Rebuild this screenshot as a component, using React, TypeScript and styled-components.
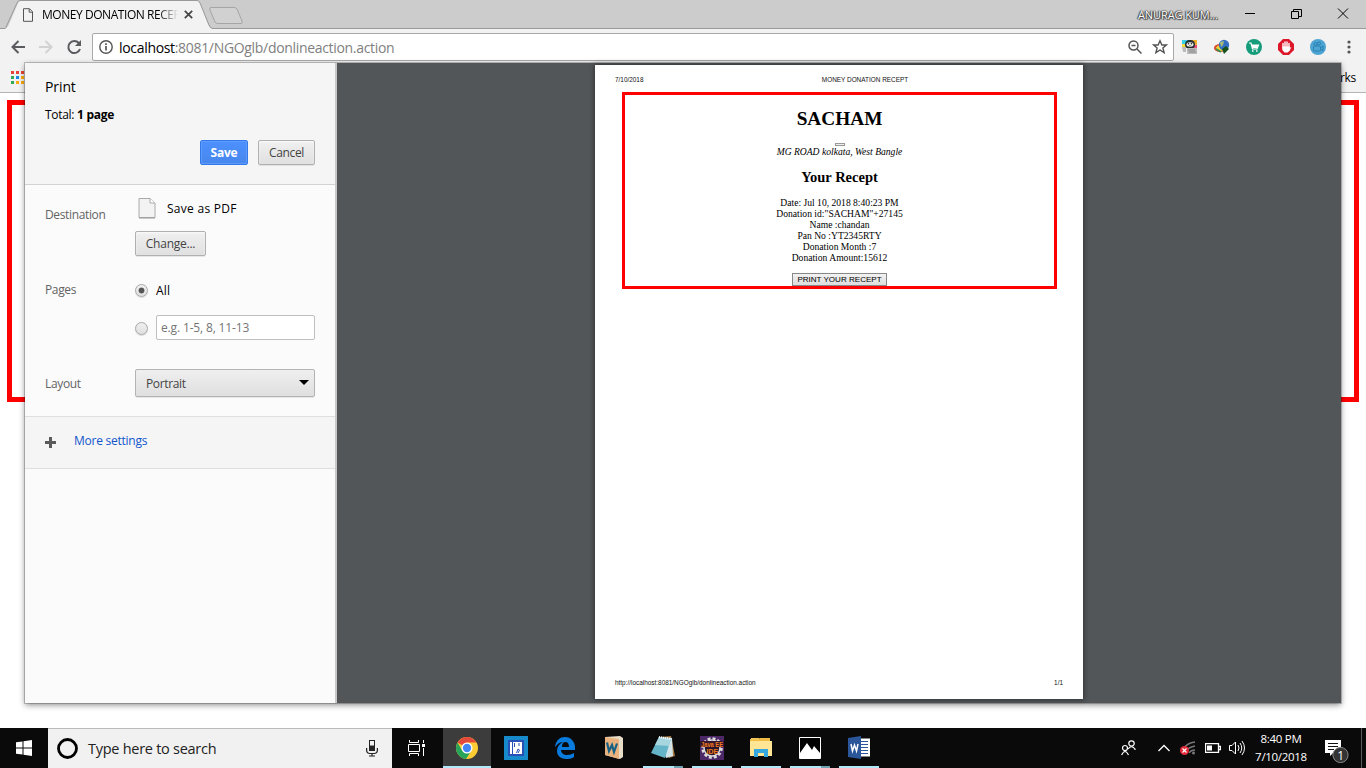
import React from "react";
import styled, { createGlobalStyle } from "styled-components";

const Global = createGlobalStyle`
  * { box-sizing: border-box; }
  body { margin: 0; background: #fff; overflow: hidden; font-family: "Open Sans", "Noto Sans", sans-serif; }
  #root { width: 1366px; height: 768px; }
  svg { display: block; flex: none; }
  button { font-family: inherit; }
`;

const Screen = styled.div`
  position: relative;
  width: 1366px;
  height: 768px;
  display: flex;
  flex-direction: column;
  background: #fff;
`;

const Text = styled.span<{ $size?: number; $track?: number; $color?: string; $bold?: boolean }>`
  font-size: ${(p) => p.$size ?? 12}px;
  letter-spacing: ${(p) => p.$track ?? 0}px;
  color: ${(p) => p.$color ?? "#000"};
  font-weight: ${(p) => (p.$bold ? 700 : 400)};
  white-space: pre;
`;

/* Browser chrome */
const TabStrip = styled.header`
  height: 29px;
  display: flex;
  background: #ccc;
  position: relative;
  border-bottom: 1px solid #999;
`;
const TabShape = styled.svg`
  position: absolute;
  left: 0;
  top: 0;
`;
const Tab = styled.div`
  position: relative;
  width: 211px;
  height: 28px;
  padding: 1px 0 0 22px;
  display: flex;
  align-items: center;
`;
const TabTitle = styled.div`
  width: 137px;
  margin-left: 8px;
  overflow: hidden;
  line-height: 18px;
  display: flex;
  -webkit-mask-image: linear-gradient(90deg, #000 116px, transparent 136px);
  mask-image: linear-gradient(90deg, #000 116px, transparent 136px);
`;
const TabClose = styled.svg`
  margin-left: 5px;
`;
const WindowControls = styled.div`
  margin-left: auto;
  display: flex;
  align-items: center;
  height: 28px;
  padding-right: 17px;
`;
const UserName = styled.span`
  width: 80px;
  font-size: 11px;
  letter-spacing: -0.1px;
  color: #fff;
  white-space: nowrap;
  text-shadow: 0 0 1px #333, 0 0 1px #333, 1px 1px 1px #444, -1px 0 1px #555, 0 0 2px #555;
  margin-right: 27px;
`;
const Toolbar = styled.div`
  height: 34px;
  padding: 4px 10px 0 10px;
  background: #f2f2f2;
  display: flex;
`;
const NavButtons = styled.div`
  width: 82px;
  height: 28px;
  display: flex;
  align-items: center;
  gap: 12px;
`;
const AddressBar = styled.div`
  width: 1082px;
  height: 28px;
  border: 1px solid #a9a9a9;
  border-radius: 2px;
  background: #fff;
  display: flex;
  align-items: center;
  padding: 0 5px;
`;
const AddressText = styled.div`
  margin: 0 auto 0 5px;
  line-height: 20px;
`;
const BookmarkStar = styled.svg`
  margin-left: 10px;
`;
const Extensions = styled.div`
  display: flex;
  align-items: center;
  gap: 16px;
  height: 28px;
  margin-left: 8px;
  > :last-child { margin-left: 5px; }
`;
const BookmarksBar = styled.div`
  height: 30px;
  background: #f2f2f2;
  border-bottom: 1px solid #b4b4b4;
  display: flex;
  justify-content: space-between;
  padding: 8px 10px 0 11px;
`;
const WebPage = styled.main`
  height: 635px;
  padding: 7px;
`;
const RedFrame = styled.div`
  height: 302px;
  border: 5px solid #f00;
`;

/* Print dialog */
const Dialog = styled.section`
  position: absolute;
  left: 25px;
  top: 63px;
  width: 1316px;
  height: 640px;
  display: flex;
  background: #fbfbfb;
  box-shadow: 0 0 0 1px rgba(0, 0, 0, 0.2), 0 2px 6px rgba(0, 0, 0, 0.45);
`;
const Sidebar = styled.aside`
  width: 312px;
  display: flex;
  flex-direction: column;
  border-right: 2px solid #c8c8c8;
`;
const PrintHeader = styled.div`
  height: 122px;
  padding: 13px 20px 0;
  background: #f5f5f5;
  border-bottom: 1px solid #d2d2d2;
  display: flex;
  flex-direction: column;
`;
const Line = styled.div<{ $h: number }>`
  line-height: ${(p) => p.$h}px;
  height: ${(p) => p.$h}px;
  display: flex;
`;
const ButtonRow = styled.div`
  display: flex;
  justify-content: flex-end;
  gap: 10px;
  margin-top: 8px;
`;
const Button = styled.button<{ $w: number; $primary?: boolean }>`
  width: ${(p) => p.$w}px;
  height: 25px;
  padding: 0;
  border: 1px solid ${(p) => (p.$primary ? "#3079ed" : "#b0b0b0")};
  border-radius: 2px;
  background: ${(p) => (p.$primary ? "linear-gradient(#4d90fe, #4787ed)" : "linear-gradient(#f0f0f0, #e0e0e0)")};
  box-shadow: ${(p) => (p.$primary ? "inset 0 0 0 1px rgba(110,165,255,.6)" : "0 1px 0 rgba(0,0,0,.08), inset 0 1px 2px rgba(255,255,255,.75)")};
  display: flex;
  align-items: center;
  justify-content: center;
`;
const Settings = styled.div`
  height: 232px;
  padding: 10px 20px 0;
  border-bottom: 1px solid #dfdfdf;
  display: flex;
  flex-direction: column;
`;
const Setting = styled.div<{ $h: number }>`
  height: ${(p) => p.$h}px;
  display: grid;
  grid-template-columns: 90px 180px;
`;
const SettingLabel = styled.div<{ $top: number }>`
  padding-top: ${(p) => p.$top}px;
  line-height: 18px;
  display: flex;
`;
const Destination = styled.div`
  display: flex;
  align-items: center;
  gap: 11px;
  height: 25px;
  padding-left: 3px;
  margin-bottom: 11px;
  span { padding-top: 2px; }
`;
const RadioRow = styled.div<{ $h: number }>`
  height: ${(p) => p.$h}px;
  display: flex;
  align-items: center;
  gap: 8px;
`;
const Radio = styled.span<{ $on?: boolean }>`
  width: 13px;
  height: 13px;
  border-radius: 50%;
  border: 1px solid #a8a8a8;
  box-shadow: 0 1px 1px rgba(0, 0, 0, 0.12);
  background: ${(p) => (p.$on ? "radial-gradient(circle, #555 0 2.6px, transparent 3.3px)," : "")} linear-gradient(#efefef, #e0e0e0);
`;
const RangeInput = styled.div`
  width: 159px;
  height: 25px;
  margin-top: -2px;
  background: #fff;
  border: 1px solid #bfbfbf;
  border-radius: 2px;
  padding-left: 4px;
  display: flex;
  align-items: center;
`;
const Select = styled.div`
  width: 180px;
  height: 28px;
  border: 1px solid #b3b3b3;
  border-radius: 2px;
  background: linear-gradient(#efefef, #dfdfdf);
  box-shadow: 0 1px 0 rgba(0, 0, 0, 0.08);
  padding: 0 5px 0 10px;
  display: flex;
  align-items: center;
  justify-content: space-between;
`;
const MoreSettings = styled.div`
  height: 52px;
  padding: 0 20px 4px;
  background: #f5f5f5;
  border-bottom: 1px solid #dfdfdf;
  display: flex;
  align-items: center;
  gap: 18px;
  svg { margin-top: 4px; }
`;
const Preview = styled.div`
  flex: 1;
  background: #525659;
  padding: 2px 0 0 258px;
`;

/* Printed sheet */
const Paper = styled.article`
  width: 488px;
  height: 634px;
  background: #fff;
  box-shadow: 0 0 5px 1px rgba(0, 0, 0, 0.4);
  display: flex;
  flex-direction: column;
  font-family: "Liberation Serif", serif;
  padding: 9px 20px 11px;
`;
const PageMargin = styled.div`
  display: grid;
  grid-template-columns: 1fr auto 1fr;
  height: 11px;
  font: 6.42px/11px "Liberation Sans", sans-serif;
  color: #111;
  > :nth-child(2) { padding-left: 52px; }
  > :last-child { text-align: right; }
`;
const Receipt = styled.div`
  width: 435px;
  height: 197px;
  margin: 7px 0 0 7px;
  border: 3px solid #f00;
  display: flex;
  flex-direction: column;
  align-items: center;
  color: #000;
  white-space: pre;
  font-size: 9.6px;
  line-height: 10.9px;
`;
const Organisation = styled.h1`
  margin: 12px 0 0;
  font-size: 19.3px;
  line-height: 24px;
`;
const EmptyButton = styled.span`
  width: 10px;
  height: 4px;
  margin-top: 12px;
  border: 1px solid #999;
  background: #eee;
`;
const Address = styled.em`
  line-height: 11px;
`;
const Heading = styled.h2`
  margin: 11px 0 12px;
  font-size: 14.5px;
  line-height: 18px;
`;
const PrintButton = styled.button`
  width: 95px;
  height: 13px;
  margin-top: 9.6px;
  padding: 0;
  border: 1px solid #888;
  background: linear-gradient(#f2f2f2, #ddd);
  font: 8.05px/10px "Liberation Sans", sans-serif;
  color: #000;
  flex: none;
`;
const Spacer = styled.div`
  flex: 1;
`;

/* Taskbar */
const Taskbar = styled.footer`
  height: 40px;
  background: #0b0a0a;
  display: flex;
`;
const Start = styled.div`
  width: 48px;
  padding: 12px 0 0 16px;
`;
const Search = styled.div`
  width: 344px;
  background: #f1f1f1;
  border-top: 1px solid #bbb;
  display: flex;
  align-items: center;
  padding: 0 14px 0 8px;
  gap: 9px;
`;
const Mic = styled.div`
  margin-left: auto;
`;
const Apps = styled.nav`
  display: flex;
  gap: 1px;
  padding-left: 2px;
`;
const TaskItem = styled.div<{ $active?: boolean; $open?: boolean; $multi?: boolean }>`
  width: 48px;
  height: 40px;
  display: flex;
  flex-direction: column;
  align-items: center;
  justify-content: space-between;
  padding-top: 7px;
  background: ${(p) => (p.$active ? "#3d3c3c" : "transparent")};
  &::after {
    content: "";
    width: ${(p) => (p.$active ? 48 : 40)}px;
    height: 2px;
    background: ${(p) => (!p.$open ? "transparent" : p.$multi ? "linear-gradient(90deg, #b0e8fa 31px, #6fa3b1 31px)" : "#b0e8fa")};
  }
`;
const Tray = styled.div`
  margin-left: auto;
  display: flex;
  align-items: center;
  color: #fff;
`;
const Clock = styled.div`
  width: 54px;
  margin-left: 8px;
  display: flex;
  flex-direction: column;
  align-items: center;
  line-height: 18px;
`;
const Gap = styled.span<{ $w: number }>`
  width: ${(p) => p.$w}px;
`;
const DesktopEdge = styled.span`
  width: 5px;
  height: 40px;
  border-left: 1px solid #5b5b5b;
`;

function BrowserTop() {
  return (
    <>
      <TabStrip>
        <TabShape width="260" height="30" fill="none">
          <path d="M0 28.5H5C8 28 9 24 10 22L18 3Q19 .5 21 .5H197Q199 .5 200 3L208 24Q210 28.5 213 28.5V30H0Z" fill="#f2f2f2" />
          <path d="M0 28.5H5Q6 28 7 25L17 3Q18 .5 20 .5H197Q199 .5 200 3L209 25Q210 28.5 213 28.5" stroke="#999" />
          <path d="M211 7.5H234Q236 7.5 237 9L242 21Q243 23.5 241 23.5H218Q216 23.5 215 22L210 10Q209 7.5 211 7.5Z" fill="#d1d1d1" stroke="#a5a5a5" />
        </TabShape>
        <Tab>
          <svg width="12" height="14" viewBox="0 0 12 14" fill="none" stroke="#555"><path d="M1.5.7H7.5L10.5 3.7V13.3H1.5ZM7.2 1V4.2H10.5" /></svg>
          <TabTitle><Text $track={-0.45}>MONEY DONATION RECEPT</Text></TabTitle>
          <TabClose width="9" height="9" viewBox="0 0 9 9" stroke="#444" strokeWidth="1.7"><path d="M.8.8L8.2 8.2M8.2.8L.8 8.2" /></TabClose>
        </Tab>
        <WindowControls>
          <UserName>ANURAG KUM...</UserName>
          <svg width="104" height="12" fill="none" stroke="#000"><path d="M0 5.500H10M46.500 3.500H53.500V10.500H46.500ZM48.500 3.500V1.500H56.500V8.500H53.500M93 .500L103 10.500M103 .500L93 10.500" /></svg>
        </WindowControls>
      </TabStrip>
      <Toolbar>
        <NavButtons>
          <svg width="16" height="16" fill="none" stroke="#5a5b5e" strokeWidth="2"><path d="M15 8H2.500M8.500 2L2.500 8L8.500 14" /></svg>
          <svg width="16" height="16" fill="none" stroke="#d2d2d2" strokeWidth="2"><path d="M1 8H13.500M7.500 2L13.500 8L7.500 14" /></svg>
          <svg width="16" height="16" fill="none"><path d="M12.800 4A6 6 0 1 0 14 10" stroke="#5a5b5e" strokeWidth="2" /><path d="M15 1V7H9Z" fill="#5a5b5e" /></svg>
        </NavButtons>
        <AddressBar>
          <svg width="16" height="16" fill="none" stroke="#555"><circle cx="8" cy="8" r="6.200" strokeWidth="1.400" /><path d="M8 7V11.500M8 4.200V5.900" strokeWidth="1.700" /></svg>
          <AddressText><Text $size={14} $track={-0.32}>localhost</Text><Text $size={14} $track={-0.32} $color="#808080">:8081/NGOglb/donlineaction.action</Text></AddressText>
          <svg width="14" height="14" fill="none" stroke="#555" strokeWidth="1.500"><circle cx="5.500" cy="5.500" r="4.500" /><path d="M9 9L13.500 13.500M3.500 5.500H7.500" /></svg>
          <BookmarkStar width="16" height="16" viewBox="0 0 16 16" fill="none" stroke="#555" strokeWidth="1.400"><path d="M8 1.800L9.900 6H14.300L10.900 8.900L12.100 13.700L8 11L3.900 13.700L5.100 8.900L1.700 6H6.100Z" /></BookmarkStar>
        </AddressBar>
        <Extensions>
          <svg width="16" height="16"><path d="M0 1H8V7H0Z" fill="#3bd1e8" /><path d="M8 1H15V8H8Z" fill="#f0b02e" /><path d="M0 5H5V9H0Z" fill="#f3db3e" /><path d="M10 6H15V10H10Z" fill="#e94f78" /><rect x="3" y="1" width="10" height="9" rx="4.500" fill="#222b2e" /><ellipse cx="8" cy="5.500" rx="3.500" ry="2.200" fill="#eee" /><circle cx="6.500" cy="4.800" r=".8" fill="#222" /><circle cx="9.500" cy="4.800" r=".8" fill="#222" /><path d="M7 6H9L8 7.500Z" fill="#775" /><path d="M0 8H4V13H1ZM5 9H15V15H5Z" fill="#bbb" /><path d="M6 11H13M7 13H14" stroke="#888" /></svg>
          <svg width="16" height="16"><ellipse cx="6" cy="9" rx="6" ry="4" fill="#dc4631" /><ellipse cx="7" cy="9" rx="5" ry="3" fill="#edd339" /><circle cx="10" cy="6" r="5.200" fill="#356fc2" /><path d="M6 3L10 2L9 6L7 8Z" fill="#a9bd79" /><path d="M8 10L12 7L15 10L10 15Z" fill="#174f1d" /><path d="M2 10L7 13" stroke="#39904a" strokeWidth="2" /></svg>
          <svg width="16" height="16" fill="none"><circle cx="8" cy="8" r="8" fill="#159c7a" /><path d="M3 4H5L6.500 10H11L12.500 6H5.500" stroke="#fff" strokeWidth="1.200" /><path d="M5.500 6H12L11 9H6.500Z" fill="#fff" /><path d="M6 12H7.500M10 12H11.500" stroke="#fff" strokeWidth="1.500" /></svg>
          <svg width="16" height="16"><path d="M5 0H11L16 5V11L11 16H5L0 11V5Z" fill="#dc1729" /><path d="M5 4.500V9M7 3V8M9 3V8M11 4.500V9" stroke="#fff" strokeWidth="1.400" strokeLinecap="round" /><path d="M4.300 7.500H11.700V9L13.500 7.800L11.500 12L9.500 13.500H6.500L4.300 11Z" fill="#fff" /></svg>
          <svg width="16" height="16" fill="none" stroke="#2983b5"><circle cx="8" cy="8" r="8" fill="#4da3d1" stroke="none" /><rect x="3.500" y="7" width="7" height="5" rx="1" /><circle cx="5.500" cy="5" r="1.500" /><circle cx="9" cy="4.500" r="1.500" /><path d="M10.500 9L13 7V12L10.500 10" /></svg>
          <svg width="4" height="14" fill="#555"><circle cx="2" cy="2" r="1.600" /><circle cx="2" cy="7" r="1.600" /><circle cx="2" cy="12" r="1.600" /></svg>
        </Extensions>
      </Toolbar>
      <BookmarksBar>
        <svg width="15" height="13">
          <path d="M0 0H3V3H0ZM5 0H8V3H5ZM10 0H13V3H10Z" fill="#ea4335" />
          <path d="M0 5H3V8H0ZM0 10H3V13H0Z" fill="#34a853" /><path d="M5 5H8V8H5Z" fill="#1e88e5" />
          <path d="M10 5H13V8H10ZM5 10H8V13H5ZM10 10H13V13H10Z" fill="#fbac0c" />
        </svg>
        <Line $h={14}><Text $track={-0.3}>Other bookmarks</Text></Line>
      </BookmarksBar>
    </>
  );
}

function PrintOptions() {
  return (
    <Sidebar>
      <PrintHeader>
        <Line $h={22}><Text $size={14} $track={-0.1}>Print</Text></Line>
        <Line $h={34}><Text $track={-0.3}>Total: </Text><Text $bold $track={-0.25}>1 page</Text></Line>
        <ButtonRow>
          <Button $w={48} $primary><Text $bold $color="#fff" $track={-0.2}>Save</Text></Button>
          <Button $w={57}><Text $color="#444" $track={-0.35}>Cancel</Text></Button>
        </ButtonRow>
      </PrintHeader>
      <Settings>
        <Setting $h={83}>
          <SettingLabel $top={11}><Text $color="#646464" $track={-0.36}>Destination</Text></SettingLabel>
          <div>
            <Destination>
              <svg width="18" height="22" fill="none"><path d="M1 1.500H12L17 6V20.500H1Z" fill="#f3f3f3" stroke="#aaa" /><path d="M12 1.500V6H17" fill="#fff" stroke="#aaa" /><path d="M1 21H17" stroke="#999" /></svg>
              <Text $track={0.28}>Save as PDF</Text>
            </Destination>
            <Button $w={71}><Text $color="#444" $track={-0.25}>Change...</Text></Button>
          </div>
        </Setting>
        <Setting $h={91}>
          <SettingLabel $top={3}><Text $color="#646464" $track={-0.35}>Pages</Text></SettingLabel>
          <div>
            <RadioRow $h={24}><Radio $on /><Text $track={0.2}>All</Text></RadioRow>
            <RadioRow $h={52}><Radio /><RangeInput><Text $color="#757575" $track={-0.15}>e.g. 1-5, 8, 11-13</Text></RangeInput></RadioRow>
          </div>
        </Setting>
        <Setting $h={40}>
          <SettingLabel $top={6}><Text $color="#646464" $track={-0.35}>Layout</Text></SettingLabel>
          <Select><Text $color="#444" $track={-0.35}>Portrait</Text><svg width="10" height="7"><path d="M0 0H10L5 5Z" /></svg></Select>
        </Setting>
      </Settings>
      <MoreSettings>
        <svg width="11" height="11" stroke="#5a5a5a" strokeWidth="3"><path d="M5.500 0V11M0 5.500H11" /></svg>
        <Text $color="#15c" $track={-0.25}>More settings</Text>
      </MoreSettings>
    </Sidebar>
  );
}

const details = [
  "Date: Jul 10, 2018 8:40:23 PM",
  'Donation id:"SACHAM"+27145',
  "Name :chandan",
  "Pan No :YT2345RTY",
  "Donation Month :7",
  "Donation Amount:15612",
];

function Sheet() {
  return (
    <Paper>
      <PageMargin><span>7/10/2018</span><span>MONEY DONATION RECEPT</span><span /></PageMargin>
      <Receipt>
        <Organisation>SACHAM</Organisation>
        <EmptyButton />
        <Address>MG ROAD kolkata, West Bangle</Address>
        <Heading>Your Recept</Heading>
        {details.map((d) => <div key={d}>{d}</div>)}
        <PrintButton>PRINT YOUR RECEPT</PrintButton>
      </Receipt>
      <Spacer />
      <PageMargin><span>http://localhost:8081/NGOglb/donlineaction.action</span><span /><span>1/1</span></PageMargin>
    </Paper>
  );
}

function WindowsTaskbar() {
  return (
    <Taskbar>
      <Start><svg width="16" height="16" fill="#fff"><path d="M0 2.300L6.500 1.400V7.500H0ZM7.500 1.200L16 0V7.500H7.500ZM0 8.500H6.500V14.600L0 13.700ZM7.500 8.500H16V16L7.500 14.800Z" /></svg></Start>
      <Search>
        <svg width="23" height="23" fill="none"><circle cx="11.500" cy="11.500" r="9" stroke="#000" strokeWidth="2.800" /></svg>
        <Text $size={14.5} $track={-0.27} $color="#222">Type here to search</Text>
        <Mic><svg width="12" height="17" fill="none" stroke="#222"><rect x="3.500" y=".5" width="5" height="10" /><path d="M4 6H8V10H4Z" fill="#222" /><path d="M.6 8V10Q.6 13.500 4 13.500H8Q11.400 13.500 11.400 10V8M6 13.500V16M3 16H9" strokeWidth="1.200" /></svg></Mic>
      </Search>
      <Apps>
        <TaskItem><svg width="20" height="26" viewBox="2 0 20 26" fill="none" stroke="#fff"><path d="M3.500 5V7.500H12.500V5M2.500 9.500H13.500V16.500H2.500ZM3.500 21V18.500H12.500V21M17.500 5V8M17.500 13V21" /><path d="M16 9H19V12H16Z" fill="#fff" stroke="none" /></svg></TaskItem>
        <TaskItem $active $open><svg width="24" height="26" viewBox="0 -1 24 26"><circle cx="12" cy="12" r="11" fill="#fc3" /><path d="M12 12L2.500 6.500A11 11 0 0 1 21.500 6.500H12Z" fill="#e24a3b" /><path d="M2.500 6.500A11 11 0 0 0 11 23L16.500 14.500L7.500 15Z" fill="#28a35a" /><circle cx="12" cy="12" r="5.500" fill="#fff" /><circle cx="12" cy="12" r="4.200" fill="#4285f4" /></svg></TaskItem>
        <TaskItem><svg width="24" height="26" viewBox="0 -1 24 26"><path d="M0 0H24V24H0Z" fill="#168aca" /><path d="M4 4H20V20H4Z" fill="#294fb8" /><path d="M6 6H8V18H6ZM9 6H18V18H9Z" fill="#fff" /><path d="M10.500 7V11M12.500 17L14 13L15.500 14L14 17M15 7V10" fill="none" stroke="#294fb8" /></svg></TaskItem>
        <TaskItem><svg width="22" height="26" viewBox="0 -2 22 26" fill="#087bdc"><path d="M1 10C2 3 6 0 11 0C17 0 21 5 21 10V13H7C7 16 10 18 13 18C16 18 18 17 20 16V20C17 22 14 22 12 22C6 22 3 18 3 14C3 10 5 7 9 5C5 5 3 8 1 10ZM8 10H15C15 7 14 5 11.500 5C9 5 8 7 8 10Z" /></svg></TaskItem>
        <TaskItem><svg width="22" height="26" viewBox="0 -1 22 26"><path d="M2 1L17 0L20 2V21L17 23L2 19Z" fill="#e7ddc8" /><path d="M2 1L16 3V23L2 19Z" fill="#e9b27e" /><path d="M4 6.500L6 15L9 9L11 16L14 7.500" fill="none" stroke="#166085" strokeWidth="2.200" /></svg></TaskItem>
        <TaskItem $open $multi><svg width="24" height="26" viewBox="0 -1 24 26"><path d="M8 1L20 0L24 20L18 22Z" fill="#a47a43" /><path d="M8 1L21 2L22 20L15 22Z" fill="#d3e4e9" /><path d="M8 1L20 3L14 22L0 17Z" fill="#63b5c7" /><path d="M8 1L20 3L18 10L4 9Z" fill="#a8d6df" /><path d="M8 1L20 3" stroke="#fff" strokeWidth="2" strokeDasharray="1 1" /></svg></TaskItem>
        <TaskItem $open><svg width="24" height="26" viewBox="0 -1 24 26"><path d="M0 0H24V24H0Z" fill="#4d2867" /><circle cx="12" cy="12" r="9.500" fill="none" stroke="#ddd" strokeWidth="2.500" strokeDasharray="3 2" /><circle cx="12" cy="12" r="8" fill="#26152c" stroke="#ddd" strokeWidth="1.500" /><path d="M0 5H24V11H0Z" fill="#36192f" /><g fill="#f37919" fontFamily="Liberation Sans" fontWeight="bold"><text x="1" y="11" fontSize="7" textLength="22" lengthAdjust="spacingAndGlyphs">Java EE</text><text x="6.500" y="17.500" fontSize="7">IDE</text></g></svg></TaskItem>
        <TaskItem $open><svg width="22" height="26" viewBox="0 -2 22 26"><path d="M0 2H8L10 1H20V4H22V19H0Z" fill="#efbd45" /><path d="M0 4H22V19H0Z" fill="#ffe594" /><path d="M1 1H9V3H1Z" fill="#f5c456" /><path d="M4 12H18V20H14V16H8V20H4Z" fill="#35a9df" /></svg></TaskItem>
        <TaskItem $open $multi><svg width="22" height="26" viewBox="0 -2 22 26"><path d="M.5.500H21.500V21.500H.500Z" stroke="#fff" fill="#000" /><path d="M1 16L8 6L13 13L15 9L21 16V21H1Z" fill="#fff" /></svg></TaskItem>
        <TaskItem $open><svg width="23" height="26" viewBox="0 -1 23 26"><path d="M11 2.500H22V20.500H11Z" fill="#fff" /><path d="M13 5.500H20M13 8.500H20M13 11.500H20M13 14.500H20M13 17.500H20" stroke="#2b579a" /><path d="M0 2L13 0V23L0 21Z" fill="#2b579a" /><path d="M3 8L4.500 15L6.500 9L8.500 15L10 8" fill="none" stroke="#fff" strokeWidth="1.500" /></svg></TaskItem>
      </Apps>
      <Tray>
        <svg width="15" height="16" fill="none" stroke="#fff" strokeWidth="1.200"><circle cx="10.500" cy="3.500" r="2.700" /><path d="M7 9Q10.500 4.500 14 9V10" /><circle cx="4" cy="8" r="2.500" /><path d="M.6 15Q4 8 7.500 15" /></svg>
        <Gap $w={22} />
        <svg width="12" height="8" fill="none" stroke="#fff" strokeWidth="1.300"><path d="M.5 7L6 1.500L11.500 7" /></svg>
        <Gap $w={10} />
        <svg width="16" height="16" fill="none"><path d="M3 9Q7 3 15 2M6 11Q9 7 15 6M9 13Q11 10 15 10" stroke="#777" strokeWidth="1.300" /><circle cx="13.500" cy="13" r="1.500" fill="#777" /><circle cx="4.500" cy="10.500" r="4.500" fill="#e32938" /><path d="M2.500 8.500L6.500 12.500M6.500 8.500L2.500 12.500" stroke="#fff" strokeWidth="1.200" /></svg>
        <Gap $w={9} />
        <svg width="16" height="10" fill="none" stroke="#fff"><path d="M.5.500H13.500V9.500H.500ZM14 3.500H15.500V6.500H14" strokeWidth="1.300" /><path d="M2 2.500H7V7.500H2Z" fill="#fff" stroke="none" /></svg>
        <Gap $w={7} />
        <svg width="18" height="16" fill="none" stroke="#fff"><path d="M1.500 5.500H4L7.500 2V14L4 10.500H1.500ZM10 5Q12 8 10 11M12 3Q15.500 8 12 13M14 1Q19 8 14 15" /></svg>
        <Clock><Text $color="#fff" $size={11.5} $track={-0.3}>8:40 PM</Text><Text $color="#fff" $size={11.5} $track={-0.3}>7/10/2018</Text></Clock>
        <Gap $w={16} />
        <svg width="26" height="30" viewBox="0 0 26 30"><path d="M1 7H17V20H9L6 23V20H1Z" fill="#fff" /><path d="M4 10.500H14M4 13.500H14M4 16.500H10" stroke="#111" /><circle cx="16.500" cy="22" r="7.600" fill="#343434" stroke="#888" /><text x="13.300" y="26.500" fill="#fff" fontSize="12" fontFamily="Open Sans">1</text></svg>
        <Gap $w={11} />
        <DesktopEdge />
      </Tray>
    </Taskbar>
  );
}

export default function App() {
  return (
    <Screen>
      <Global />
      <BrowserTop />
      <WebPage><RedFrame /></WebPage>
      <WindowsTaskbar />
      <Dialog><PrintOptions /><Preview><Sheet /></Preview></Dialog>
    </Screen>
  );
}
